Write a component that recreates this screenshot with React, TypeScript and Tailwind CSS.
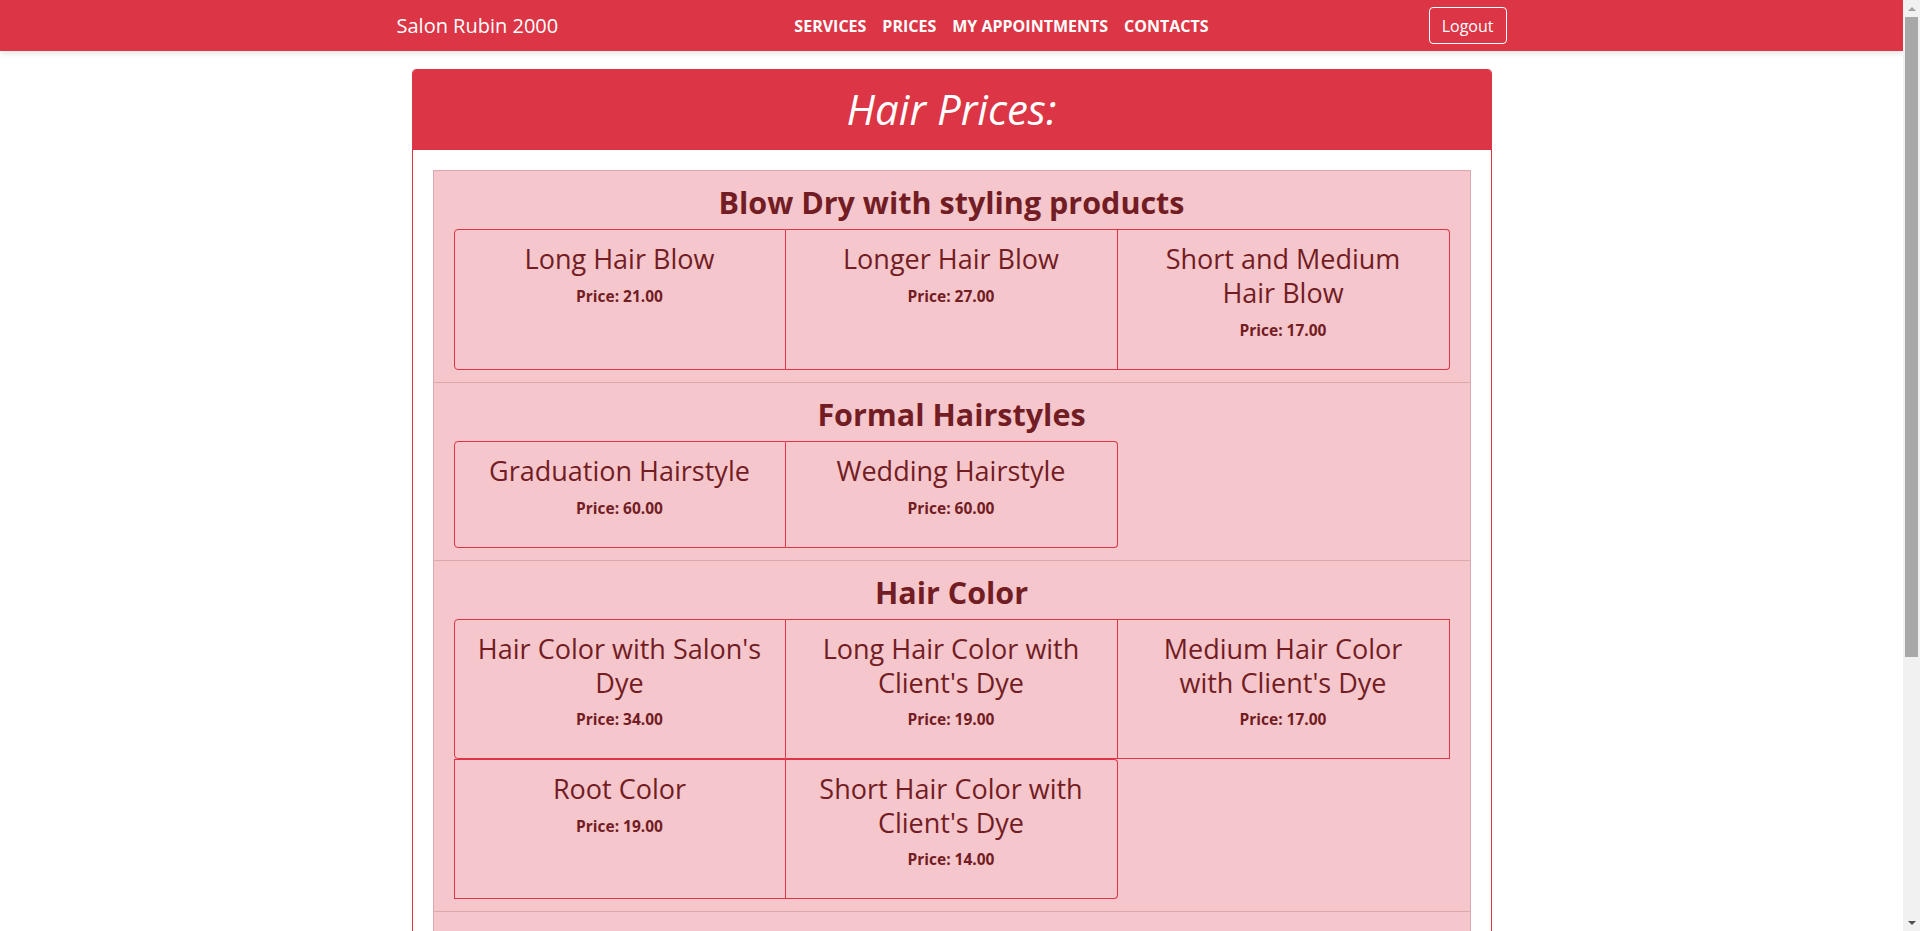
import React from 'react';

type Service = { name: string; price: string };
type Section = { title: string; items: Service[] };

// line breaks follow the wrapping of the original page
const sections: Section[] = [
  {
    title: 'Blow Dry with styling products',
    items: [
      { name: 'Long Hair Blow', price: '21.00' },
      { name: 'Longer Hair Blow', price: '27.00' },
      { name: 'Short and Medium\nHair Blow', price: '17.00' }
    ]
  },
  {
    title: 'Formal Hairstyles',
    items: [
      { name: 'Graduation Hairstyle', price: '60.00' },
      { name: 'Wedding Hairstyle', price: '60.00' }
    ]
  },
  {
    title: 'Hair Color',
    items: [
      { name: "Hair Color with Salon's\nDye", price: '34.00' },
      { name: "Long Hair Color with\nClient's Dye", price: '19.00' },
      { name: "Medium Hair Color\nwith Client's Dye", price: '17.00' },
      { name: 'Root Color', price: '19.00' },
      { name: "Short Hair Color with\nClient's Dye", price: '14.00' }
    ]
  },
  {
    title: 'Haircuts',
    items: [
      { name: "Men's Haircut", price: '12.00' },
      { name: "Women's Haircut", price: '18.00' },
      { name: "Children's Haircut", price: '10.00' }
    ]
  }
];

const navLinks = ['Services', 'Prices', 'My Appointments', 'Contacts'];

function Navbar() {
  return (
    <nav className="h-[51px] bg-[#dc3545] shadow-[0_2px_6px_rgba(0,0,0,0.12)]">
      <div className="mx-auto flex h-full w-[1140px] items-center px-[15px]">
        <a href="#" className="mr-4 text-[20px] leading-[30px] text-white">
          Salon Rubin 2000
        </a>
        <ul className="mx-auto flex">
          {navLinks.map((link) => (
            <li key={link}>
              <a href="#" className="block px-2 text-[16px] font-bold uppercase leading-6 text-white">
                {link}
              </a>
            </li>
          ))}
        </ul>
        <button className="h-[37px] rounded border border-white px-3 text-[16px] text-white">
          Logout
        </button>
      </div>
    </nav>
  );
}

function ServiceCard({ item, index, count }: { item: Service; index: number; count: number }) {
  const first = index === 0;
  const last = index === count - 1;
  return (
    <div
      className={
        'basis-1/3 border border-[#dc3545] px-3 pt-3 pb-[27px] text-center ' +
        (index % 3 !== 0 ? 'border-l-0 ' : '') +
        (first ? 'rounded-l ' : '') +
        (last ? 'rounded-r' : '')
      }
    >
      <h3 className="mb-2 whitespace-pre-line text-[27px] leading-[33.6px]">{item.name}</h3>
      <p className="text-[15.5px] font-bold leading-6">Price: {item.price}</p>
    </div>
  );
}

// the page is taller than the window: draw the browser's classic scrollbar
function Scrollbar() {
  return (
    <div className="flex w-[17px] shrink-0 flex-col items-center bg-[#f1f1f1]">
      <div className="flex h-[17px] items-center justify-center">
        <div className="h-0 w-0 border-x-[4px] border-b-[4px] border-x-transparent border-b-[#a3a3a3]" />
      </div>
      <div className="h-[640px] w-[13px] bg-[#a8a8a8]" />
      <div className="flex-1" />
      <div className="flex h-[17px] items-center justify-center">
        <div className="h-0 w-0 border-x-[4px] border-t-[4px] border-x-transparent border-t-[#505050]" />
      </div>
    </div>
  );
}

export default function App() {
  return (
    <div className="flex h-screen bg-white font-['Open_Sans',sans-serif] text-[#721c24]">
      <div className="min-w-0 flex-1 overflow-hidden">
        <Navbar />

        <div className="mx-auto mt-[18px] mb-10 w-[1080px] overflow-hidden rounded border border-[#dc3545]">
          <div className="flex h-[80px] items-center justify-center border-b border-[#dc3545] bg-[#dc3545]">
            <h1 className="text-[42px] font-normal italic leading-[1.2] text-white">Hair Prices:</h1>
          </div>

          <div className="p-5">
            {sections.map((section, i) => (
              <div
                key={section.title}
                className={
                  'border border-[#dba8ae] bg-[#f5c6cb] px-5 py-3 ' +
                  (i > 0 ? 'border-t-0 ' : '') +
                  (i === sections.length - 1 ? 'rounded-b' : '')
                }
              >
                <h2 className="mb-2 text-center text-[30.5px] font-bold leading-[38.4px]">{section.title}</h2>
                <div className="flex flex-wrap">
                  {section.items.map((item, j) => (
                    <ServiceCard key={item.name} item={item} index={j} count={section.items.length} />
                  ))}
                </div>
              </div>
            ))}
          </div>
        </div>
      </div>
      <Scrollbar />
    </div>
  );
}
